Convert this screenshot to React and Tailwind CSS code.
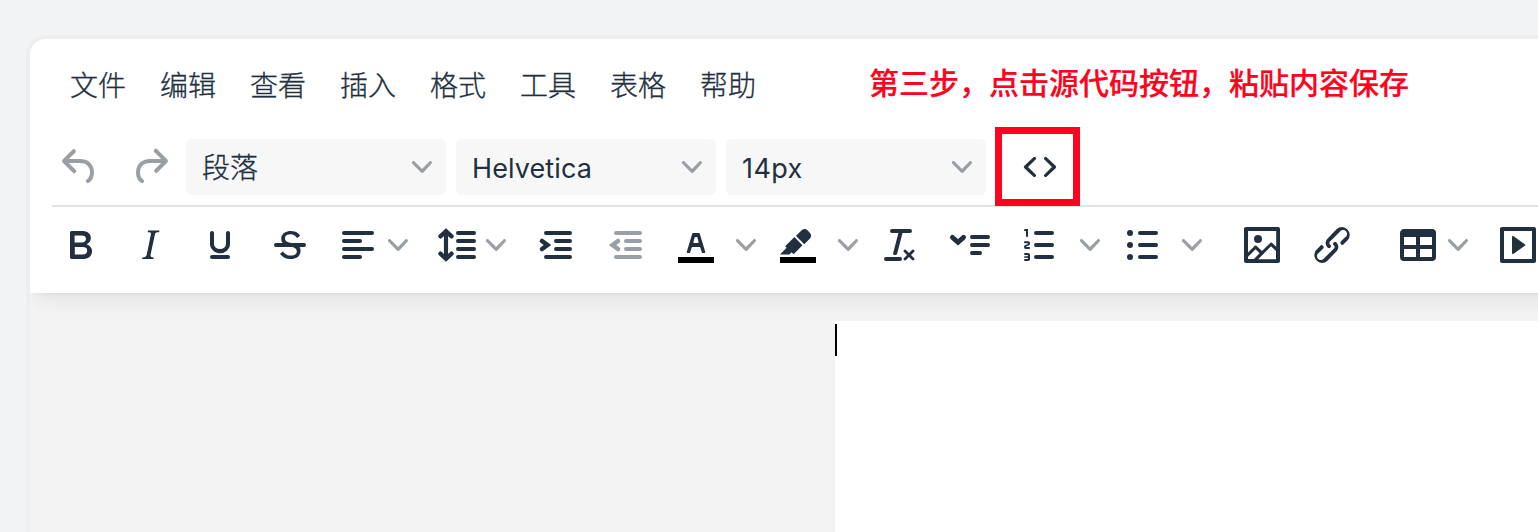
import React from "react";

const bar = (x1, x2, y) => `M${x1 + 1} ${y - 1}H${x2 - 1}a1 1 0 0 1 0 2H${x1 + 1}a1 1 0 0 1 0-2Z`;

function Icon({ className = "", children }) {
  return (
    <svg viewBox="0 0 24 24" fill="currentColor" fillRule="evenodd" className={`size-12 shrink-0 ${className}`}>
      {children}
    </svg>
  );
}

function Chevron({ className = "" }) {
  return (
    <svg viewBox="0 0 10 10" fill="currentColor" className={`size-5 shrink-0 text-[#999fa5] ${className}`}>
      <path d="M8.7 2.2c.3-.3.8-.3 1 0 .4.4.4.9 0 1.2L5.7 7.8c-.3.3-.9.3-1.2 0L.2 3.4a.8.8 0 0 1 0-1.2c.3-.3.8-.3 1.1 0L5 6l3.7-3.8Z" />
    </svg>
  );
}

function Select({ label, className = "" }) {
  return (
    <button className="flex h-14 w-[260px] shrink-0 items-center justify-between rounded-md bg-[#f7f7f7] pr-3.5 pl-4">
      <span className={className}>{label}</span>
      <Chevron />
    </button>
  );
}

const menus = ["文件", "编辑", "查看", "插入", "格式", "工具", "表格", "帮助"];

function Toolbar() {
  return (
    <div className="flex h-[86px] items-center pb-[10px] pl-[26px]">
      <Icon>
        <path d="M7.8 19c-.3 0-.5 0-.6-.2l-.2-.5V5.7c0-.2 0-.4.2-.5l.6-.2h5c1.5 0 2.7.3 3.5 1 .7.6 1.1 1.4 1.1 2.5a3 3 0 0 1-.6 1.9c-.4.6-1 1-1.6 1.2.4.1.9.3 1.3.6s.8.7 1 1.2c.4.4.5 1 .5 1.6 0 1.3-.4 2.3-1.3 3-.8.7-2.1 1-3.8 1H7.8Zm5-8.3c.6 0 1.2-.1 1.6-.5.4-.3.6-.7.6-1.3 0-1.1-.8-1.7-2.3-1.7H9.3v3.5h3.4Zm.5 6c.7 0 1.3-.1 1.7-.4.4-.4.6-.9.6-1.5s-.2-1-.7-1.4c-.4-.3-1-.4-2-.4H9.4v3.8h4Z" />
      </Icon>
      <Icon className="ml-[22px]">
        <path d="m16.7 4.7-.1.9h-.3c-.6 0-1 0-1.4.3-.3.3-.4.6-.5 1.1l-2.1 9.8v.6c0 .5.4.8 1.4.8h.2l-.2.8H8l.2-.8h.2c1.1 0 1.8-.5 2-1.5l2-9.8.1-.5c0-.6-.4-.8-1.4-.8h-.3l.2-.9h5.8Z" />
      </Icon>
      <Icon className="ml-[22px]">
        <path d="M16 5c.6 0 1 .4 1 1v5.5a4 4 0 0 1-.4 1.8l-1 1.4a5.3 5.3 0 0 1-5.5 1 5 5 0 0 1-1.6-1c-.5-.4-.8-.9-1.1-1.4a4 4 0 0 1-.4-1.8V6c0-.6.4-1 1-1s1 .4 1 1v5.5c0 .3 0 .6.2 1l.6.7a3.3 3.3 0 0 0 2.2.8 3.4 3.4 0 0 0 2.2-.8c.3-.2.4-.5.6-.8l.2-.9V6c0-.6.4-1 1-1ZM8 17h8c.6 0 1 .4 1 1s-.4 1-1 1H8a1 1 0 0 1 0-2Z" />
      </Icon>
      <Icon className="ml-[22px]">
        <path d="M15.6 8.5c-.5-.7-1-1.1-1.3-1.3-.6-.4-1.3-.6-2-.6-2.7 0-2.8 1.7-2.8 2.1 0 1.6 1.8 2 3.2 2.3 4.4.9 4.6 2.8 4.6 3.9 0 1.4-.7 4.1-5 4.1A6.2 6.2 0 0 1 7 16.4l1.5-1.1c.4.6 1.6 2 3.7 2 1.6 0 2.5-.4 3-1.2.4-.8.3-2-.8-2.6-.7-.4-1.6-.7-2.9-1-1-.2-3.9-.8-3.9-3.6C7.6 6 10.3 5 12.4 5c2.9 0 4.2 1.6 4.7 2.4l-1.5 1.1Z" />
        <path d={bar(4, 20, 12)} />
      </Icon>
      <Icon className="ml-5">
        <path d={bar(4, 20, 6) + bar(4, 14, 10) + bar(4, 20, 14) + bar(4, 14, 18)} />
      </Icon>
      <Chevron className="ml-1.5" />
      <Icon className="ml-6">
        <path d={bar(12, 22, 6) + bar(12, 22, 10) + bar(12, 22, 14) + bar(12, 22, 18)} />
        <path d="M7 5.2v13.6M4.2 7.7 7 5.1l2.8 2.6M4.2 16.3 7 18.9l2.8-2.6" fill="none" stroke="currentColor" strokeWidth="2.1" strokeLinecap="round" />
      </Icon>
      <Chevron className="ml-1.5" />
      <Icon className="ml-[26px]">
        <path d={bar(6, 20, 6) + bar(11, 20, 10) + bar(11, 20, 14) + bar(6, 20, 18)} />
        <path d="M5 10 7.7 12 5 14" fill="none" stroke="currentColor" strokeWidth="2.3" strokeLinecap="round" />
      </Icon>
      <Icon className="ml-[22px] text-[#999fa5]">
        <path d={bar(6, 20, 6) + bar(11, 20, 10) + bar(11, 20, 14) + bar(6, 20, 18)} />
        <path d="M8 10 5.3 12 8 14" fill="none" stroke="currentColor" strokeWidth="2.3" strokeLinecap="round" />
      </Icon>
      <Icon className="ml-[22px]">
        <path className="fill-black" d="M3 18h18v3H3z" />
        <path d="M8.7 16h-.8a.5.5 0 0 1-.5-.6l2.7-9c.1-.3.3-.4.5-.4h2.8c.2 0 .4.1.5.4l2.7 9a.5.5 0 0 1-.5.6h-.8a.5.5 0 0 1-.4-.4l-.7-2.2c0-.3-.3-.4-.5-.4h-3.4c-.2 0-.4.1-.5.4l-.7 2.2c0 .3-.2.4-.4.4Zm2.6-7.6-.6 2a.5.5 0 0 0 .5.6h1.6a.5.5 0 0 0 .5-.6l-.6-2c0-.3-.3-.4-.5-.4h-.4c-.2 0-.4.1-.5.4Z" />
      </Icon>
      <Chevron className="ml-4" />
      <Icon className="ml-[18px]">
        <path className="fill-black" d="M3 18h18v3H3z" />
        <path d="M7.7 16.7H3l3.3-3.3-.7-.8L10.2 8l4 4.1-4 4.2c-.2.2-.6.2-.8 0l-.6-.7-1.1 1.1ZM12.7 9.2 11 7.4l3-2.9a2 2 0 0 1 2.6 0L18 6c.7.7.7 2 0 2.7l-2.9 2.9-1.8-1.8-.5-.6Z" />
      </Icon>
      <Chevron className="ml-4" />
      <Icon className="ml-[18px]">
        <path d="M13.2 6a1 1 0 0 1 0 .2l-2.6 10a1 1 0 0 1-1 .8h-.2a.8.8 0 0 1-.8-1l2.6-10H8a1 1 0 1 1 0-2h9a1 1 0 0 1 0 2h-3.8ZM5 18h7a1 1 0 0 1 0 2H5a1 1 0 0 1 0-2Zm13 1.5L16.5 18 15 19.5a.7.7 0 0 1-1-1l1.5-1.5-1.5-1.5a.7.7 0 0 1 1-1l1.5 1.5 1.5-1.5a.7.7 0 0 1 1 1L17.5 17l1.5 1.5a.7.7 0 0 1-1 1Z" />
      </Icon>
      <Icon className="ml-[22px]">
        <path d={bar(12, 22, 8) + bar(12, 22, 12) + bar(12, 18, 16)} />
        <path d="M3.2 8.2 6 10.7 8.8 8.2" fill="none" stroke="currentColor" strokeWidth="2.4" strokeLinecap="round" />
      </Icon>
      <Icon className="ml-[22px]">
        <path d={bar(9, 19, 6) + bar(9, 19, 12) + bar(9, 19, 18)} />
        <path d="M6 4v3.5c0 .3-.2.5-.5.5a.5.5 0 0 1-.5-.5V5h-.5a.5.5 0 0 1 0-1H6Zm-1 8.8.2.2h1.3c.3 0 .5.2.5.5s-.2.5-.5.5H4.9a1 1 0 0 1-.9-1V13c0-.4.3-.8.6-1l1.2-.4.2-.3a.2.2 0 0 0-.2-.2H4.5a.5.5 0 0 1-.5-.5c0-.3.2-.5.5-.5h1.6c.5 0 .9.4.9 1v.1c0 .4-.3.8-.6 1l-1.2.4-.2.3ZM7 17v2c0 .6-.4 1-1 1H4.5a.5.5 0 0 1 0-1h1.2c.2 0 .3-.1.3-.3 0-.2-.1-.3-.3-.3H4.4a.4.4 0 1 1 0-.8h1.3c.2 0 .3-.1.3-.3 0-.2-.1-.3-.3-.3H4.5a.5.5 0 1 1 0-1H6c.6 0 1 .4 1 1Z" />
      </Icon>
      <Chevron className="ml-4" />
      <Icon className="ml-[18px]">
        <path d={bar(10, 20, 6) + bar(10, 20, 12) + bar(10, 20, 18)} />
        <circle cx="6" cy="6" r="1.5" />
        <circle cx="6" cy="12" r="1.5" />
        <circle cx="6" cy="18" r="1.5" />
      </Icon>
      <Chevron className="ml-4" />
      <Icon className="ml-9">
        <path d="m5 15.7 3.3-3.2c.3-.3.7-.3 1 0L12 15l4.1-4c.3-.4.8-.4 1 0l2 1.9V5H5v10.7ZM5 18V19h3l2.8-2.9-2-2L5 17.9Zm14-3-2.5-2.4-6.4 6.5H19v-4ZM4 3h16c.6 0 1 .4 1 1v16c0 .6-.4 1-1 1H4a1 1 0 0 1-1-1V4c0-.6.4-1 1-1Zm6 8a2 2 0 1 0 0-4 2 2 0 0 0 0 4Z" />
      </Icon>
      <Icon className="ml-[22px]">
        <path d="M6.2 12.3a1 1 0 0 1 1.4 1.4l-2 2a2 2 0 1 0 2.6 2.8l4.8-4.8a1 1 0 0 0 0-1.4 1 1 0 1 1 1.4-1.3 2.9 2.9 0 0 1 0 4L9.6 20a3.9 3.9 0 0 1-5.5-5.5l2-2Zm11.6-.6a1 1 0 0 1-1.4-1.4l2-2a2 2 0 1 0-2.6-2.8L11 10.3a1 1 0 0 0 0 1.4A1 1 0 1 1 9.6 13a2.9 2.9 0 0 1 0-4L14.4 4a3.9 3.9 0 0 1 5.5 5.5l-2 2Z" />
      </Icon>
      <Icon className="ml-[38px]">
        <path d="M19 4a2 2 0 0 1 2 2v12a2 2 0 0 1-2 2H5a2 2 0 0 1-2-2V6c0-1.1.9-2 2-2h14ZM5 14v4h6v-4H5Zm14 0h-6v4h6v-4Zm0-6h-6v4h6V8ZM5 12h6V8H5v4Z" />
      </Icon>
      <Chevron className="ml-1.5" />
      <Icon className="ml-[26px]">
        <path d="M4 3h16c.6 0 1 .4 1 1v16c0 .6-.4 1-1 1H4a1 1 0 0 1-1-1V4c0-.6.4-1 1-1Zm1 2v14h14V5H5Zm4.8 2.6 5.6 4a.5.5 0 0 1 0 .8l-5.6 4A.5.5 0 0 1 9 16V8a.5.5 0 0 1 .8-.4Z" />
      </Icon>
    </div>
  );
}

export default function App() {
  return (
    <div lang="zh-CN" className="h-[532px] w-[1538px] overflow-hidden bg-[#f1f3f5] pt-[35px] pl-[26px] font-['Inter','Noto_Sans_CJK_SC',sans-serif] text-[#222f3e]">
      <div className="flex h-[600px] w-[1600px] flex-col overflow-hidden rounded-[20px] border-4 border-[#eee] bg-[#f3f3f3]">
        <header className="z-10 h-[254px] shrink-0 bg-white shadow-[0_4px_4px_-4px_rgba(34,47,62,0.1),0_16px_16px_-8px_rgba(34,47,62,0.07)]">
          <div className="flex h-[92px] items-center pl-10 text-[28px] leading-10">
            <nav className="flex gap-[34px] pt-0.5 font-light [-webkit-text-stroke:0.3px_#222f3e]">
              {menus.map((m) => (
                <span key={m} className="w-14 whitespace-nowrap">{m}</span>
              ))}
            </nav>
            <p className="mb-[9px] ml-[113px] font-['Noto_Sans_CJK_SC',sans-serif] text-[30px] font-medium whitespace-nowrap text-[#ff0220] [-webkit-text-stroke:0.2px_#ff0220]">
              第三步，点击源代码按钮，粘贴内容保存
            </p>
          </div>
          <div className="ml-[22px] flex h-[76px] items-center border-b-2 border-[#e3e3e3] pb-0.5 pl-1 text-[28px]">
            <Icon className="text-[#999fa5]">
              <path d="M6.4 8H12c3.7 0 6.2 2 6.8 5.1.6 2.7-.4 5.6-2.3 6.8a1 1 0 0 1-1-1.8c1.1-.6 1.8-2.7 1.4-4.6-.5-2.1-2.1-3.5-4.9-3.5H6.4l3.3 3.3a1 1 0 1 1-1.4 1.4l-5-5a1 1 0 0 1 0-1.4l5-5a1 1 0 0 1 1.4 1.4L6.4 8Z" />
            </Icon>
            <Icon className="ml-[22px] text-[#999fa5]">
              <path d="M17.6 10H12c-2.8 0-4.4 1.4-4.9 3.5-.4 2 .3 4 1.4 4.6a1 1 0 1 1-1 1.8c-2-1.2-2.9-4.1-2.3-6.8.6-3 3-5.1 6.8-5.1h5.6l-3.3-3.3a1 1 0 1 1 1.4-1.4l5 5a1 1 0 0 1 0 1.4l-5 5a1 1 0 0 1-1.4-1.4l3.3-3.3Z" />
            </Icon>
            <div className="ml-3 flex gap-2.5">
              <Select label="段落" className="pt-0.5 font-light [-webkit-text-stroke:0.3px_#222f3e]" />
              <Select label="Helvetica" className="pt-[5px] text-[27px] tracking-[0.1px]" />
              <Select label="14px" className="pt-[5px] text-[27px] tracking-[0.4px]" />
            </div>
            <button className="mb-px ml-[9px] flex h-[79px] w-[85px] shrink-0 items-center justify-center border-[7px] border-[#ff0220] pl-[5px]">
              <Icon>
                <path d="M9.8 15.7c.3.3.3.8 0 1-.3.4-.9.4-1.2 0l-4.4-4.1a.8.8 0 0 1 0-1.2l4.4-4.2c.3-.3.9-.3 1.2 0 .3.3.3.8 0 1.1L6 12l3.8 3.7ZM14.2 15.7c-.3.3-.3.8 0 1 .4.4.9.4 1.2 0l4.4-4.1c.3-.3.3-.8 0-1.2l-4.4-4.2a.8.8 0 0 0-1.2 0c-.3.3-.3.8 0 1.1L18 12l-3.8 3.7Z" />
              </Icon>
            </button>
          </div>
          <Toolbar />
        </header>
        <main className="flex grow pt-7 pl-[805px]">
          <div className="grow bg-white pt-[3px]">
            <div className="h-8 w-0.5 bg-black" />
          </div>
        </main>
      </div>
    </div>
  );
}
